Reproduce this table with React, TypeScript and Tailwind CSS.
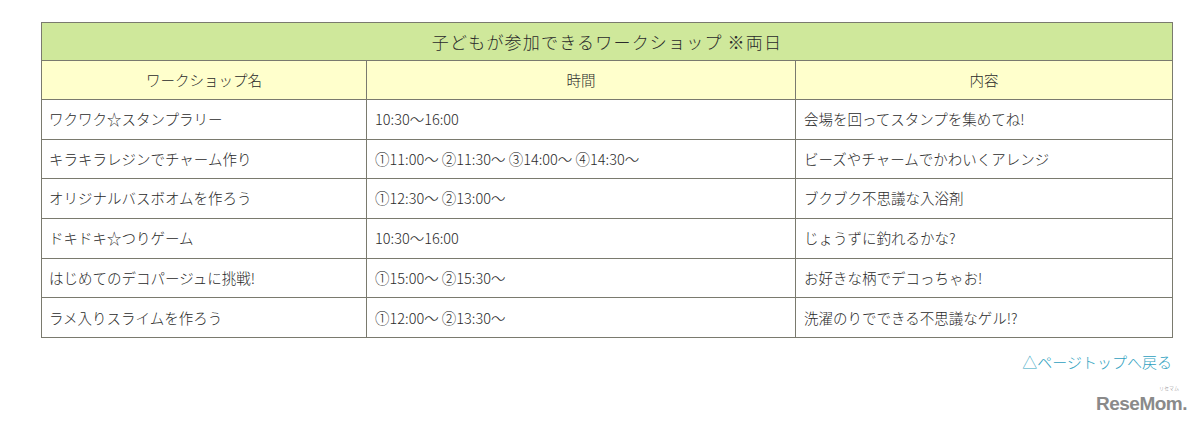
import React from "react";

const rows: [string, string, string][] = [
  ["ワクワク☆スタンプラリー", "10:30〜16:00", "会場を回ってスタンプを集めてね!"],
  ["キラキラレジンでチャーム作り", "①11:00〜 ②11:30〜 ③14:00〜 ④14:30〜", "ビーズやチャームでかわいくアレンジ"],
  ["オリジナルバスボオムを作ろう", "①12:30〜 ②13:00〜", "ブクブク不思議な入浴剤"],
  ["ドキドキ☆つりゲーム", "10:30〜16:00", "じょうずに釣れるかな?"],
  ["はじめてのデコパージュに挑戦!", "①15:00〜 ②15:30〜", "お好きな柄でデコっちゃお!"],
  ["ラメ入りスライムを作ろう", "①12:00〜 ②13:30〜", "洗濯のりでできる不思議なゲル!?"],
];

export default function App() {
  return (
    <div
      className="w-[1200px] h-[431px] bg-white text-[#2a2a2a] font-light overflow-hidden"
      style={{ fontFamily: '"Noto Sans CJK JP", "Noto Sans", sans-serif' }}
    >
      <div className="pt-[22px] pl-[41px] pr-[28px]">
        <table className="w-[1131px] border-collapse table-fixed text-[14.5px] leading-none">
          <colgroup>
            <col className="w-[325px]" />
            <col className="w-[429px]" />
            <col className="w-[377px]" />
          </colgroup>
          <thead>
            <tr className="h-[38px]">
              <th
                colSpan={3}
                className="border border-[#7a7a6e] bg-[#cfe89b] font-light text-[17px] tracking-[1.2px] text-center"
              >
                子どもが参加できるワークショップ ※両日
              </th>
            </tr>
            <tr className="h-[39px]">
              <th className="border border-[#7a7a6e] bg-[#ffffcc] font-light text-center">ワークショップ名</th>
              <th className="border border-[#7a7a6e] bg-[#ffffcc] font-light text-center">時間</th>
              <th className="border border-[#7a7a6e] bg-[#ffffcc] font-light text-center">内容</th>
            </tr>
          </thead>
          <tbody>
            {rows.map((r, i) => (
              <tr key={i} className="h-[39.7px]">
                <td className="border border-[#7a7a6e] px-[7px]">{r[0]}</td>
                <td className="border border-[#7a7a6e] px-[8px]">{r[1]}</td>
                <td className="border border-[#7a7a6e] px-[8px]">{r[2]}</td>
              </tr>
            ))}
          </tbody>
        </table>
        <div className="flex justify-end w-[1131px] mt-[16px]">
          <a className="text-[15px] text-[#2e9fc0] leading-none">△ページトップへ戻る</a>
        </div>
        <div className="flex justify-end w-[1146px] mt-[22px]">
          <div className="relative">
            <span className="absolute right-[8px] top-[-6px] text-[5px] text-[#888] leading-none">
              リセマム
            </span>
            <span
              className="text-[19px] font-bold text-[#8a8a8a] tracking-[-0.5px] leading-none"
              style={{ fontFamily: '"Liberation Sans", Arial, sans-serif' }}
            >
              ReseMom.
            </span>
          </div>
        </div>
      </div>
    </div>
  );
}
